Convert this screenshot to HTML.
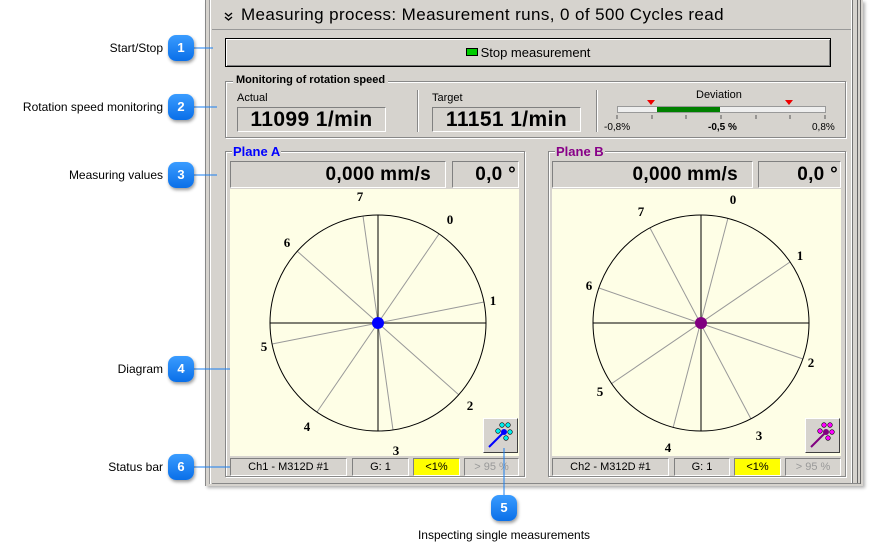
<!DOCTYPE html>
<html><head><meta charset="utf-8"><style>
body{margin:0;width:874px;height:559px;background:#fff;position:relative;overflow:hidden;font-family:"Liberation Sans",sans-serif;}
.a{position:absolute;box-sizing:border-box;}
.lbl{position:absolute;font-size:12px;color:#000;text-align:right;width:160px;left:3px;}
.badge{position:absolute;width:26px;height:26px;border-radius:8px;background:linear-gradient(#3a9cff,#0a6fe8);color:#fff;font-weight:bold;font-size:13px;text-align:center;line-height:26px;box-shadow:1px 2px 3px rgba(0,0,0,.4);}
.sunk{border:1px solid;border-color:#808080 #fff #fff #808080;background:#d6d3ce;}
.grp{border:1px solid #888;box-shadow:1px 1px 0 #fff inset,1px 1px 0 #fff;}
.st{position:absolute;height:18px;top:458px;font-size:11px;text-align:center;line-height:17px;border:1px solid;border-color:#808080 #fff #fff #808080;box-sizing:border-box;}
.big{font-weight:bold;font-size:21px;letter-spacing:0.4px;}
.val{font-weight:bold;font-size:19px;letter-spacing:0.3px;}
</style></head><body>
<!-- outer panel -->
<div class="a" style="left:205px;top:0;width:658px;height:486px;background:#d6d3ce;border-left:1px solid #888;box-shadow:2px 2px 3px rgba(0,0,0,.3);"></div>
<div class="a" style="left:209px;top:0;width:2px;height:484px;background:#fff;border-left:1px solid #999"></div>
<div class="a" style="left:851px;top:0;width:2px;height:484px;background:#fff;border-right:1px solid #777"></div>
<div class="a" style="left:857px;top:0;width:4px;height:484px;border-left:1px solid #666;border-right:1px solid #666"></div>
<div class="a" style="left:212px;top:29px;width:639px;height:1px;background:#999"></div>
<div class="a" style="left:212px;top:483px;width:648px;height:1px;background:#888"></div>
<svg class="a" style="left:224px;top:12px" width="10" height="10"><path d="M1 1 L4.5 4 L8 1 M1 5 L4.5 8 L8 5" stroke="#000" stroke-width="1.4" fill="none"/></svg>
<div class="a" style="left:241px;top:5px;font-size:17px;letter-spacing:0.4px;color:#000;white-space:nowrap">Measuring process: Measurement runs, 0 of 500 Cycles read</div>
<!-- button -->
<div class="a" style="left:225px;top:38px;width:606px;height:29px;border:1px solid #000;box-shadow:inset 1px 1px 0 #fff,inset -1px -1px 0 #808080;background:#d6d3ce;text-align:center;font-size:13px;line-height:27px"><span style="display:inline-block;width:10px;height:6px;background:#0c0;border:1px solid #000;margin-right:3px;vertical-align:1px"></span>Stop measurement</div>
<!-- monitoring group -->
<div class="a grp" style="left:225px;top:81px;width:621px;height:57px"></div>
<div class="a" style="left:233px;top:74px;font-size:11px;font-weight:bold;background:#d6d3ce;padding:0 3px">Monitoring of rotation speed</div>
<div class="a" style="left:237px;top:92px;font-size:11px">Actual</div>
<div class="a sunk big" style="left:237px;top:107px;width:149px;height:25px;text-align:center;line-height:24px;white-space:nowrap">11099 1/min</div>
<div class="a" style="left:432px;top:92px;font-size:11px">Target</div>
<div class="a sunk big" style="left:432px;top:107px;width:149px;height:25px;text-align:center;line-height:24px;white-space:nowrap">11151 1/min</div>
<div class="a" style="left:417px;top:90px;width:2px;height:42px;border-left:1px solid #888;border-right:1px solid #fff"></div>
<div class="a" style="left:596px;top:90px;width:2px;height:42px;border-left:1px solid #888;border-right:1px solid #fff"></div>
<div class="a" style="left:696px;top:89px;font-size:11px">Deviation</div>
<div class="a" style="left:617px;top:106px;width:209px;height:7px;background:#eee;border:1px solid #999"></div>
<div class="a" style="left:657px;top:107px;width:63px;height:5px;background:#008000"></div>
<svg class="a" style="left:600px;top:96px" width="240" height="40">
<polygon points="47,4 55,4 51,9" fill="#e00"/><polygon points="185,4 193,4 189,9" fill="#e00"/>
<g stroke="#555"><line x1="17" y1="19" x2="17" y2="23"/><line x1="52" y1="19" x2="52" y2="23"/><line x1="86" y1="19" x2="86" y2="23"/><line x1="121" y1="19" x2="121" y2="23"/><line x1="156" y1="19" x2="156" y2="23"/><line x1="190" y1="19" x2="190" y2="23"/><line x1="225" y1="19" x2="225" y2="23"/></g>
</svg>
<div class="a" style="left:604px;top:122px;font-size:10px">-0,8%</div>
<div class="a" style="left:708px;top:122px;font-size:10px;font-weight:bold">-0,5 %</div>
<div class="a" style="left:812px;top:122px;font-size:10px">0,8%</div>
<!-- Plane A -->
<div class="a grp" style="left:225px;top:151px;width:300px;height:326px"></div>
<div class="a" style="left:232px;top:144px;font-size:13px;font-weight:bold;color:#00f;background:#d6d3ce;padding:0 1px">Plane A</div>
<div class="a sunk val" style="left:230px;top:161px;width:216px;height:27px;text-align:right;padding-right:14px;line-height:26px;white-space:nowrap">0,000 mm/s</div>
<div class="a sunk val" style="left:452px;top:161px;width:67px;height:27px;text-align:right;padding-right:2px;line-height:26px">0,0 °</div>
<div class="a" style="left:230px;top:189px;width:289px;height:267px;background:#fefee6"></div>
<!-- Plane B -->
<div class="a grp" style="left:548px;top:151px;width:298px;height:326px"></div>
<div class="a" style="left:555px;top:144px;font-size:13px;font-weight:bold;color:#808;background:#d6d3ce;padding:0 1px">Plane B</div>
<div class="a sunk val" style="left:552px;top:161px;width:201px;height:27px;text-align:right;padding-right:14px;line-height:26px;white-space:nowrap">0,000 mm/s</div>
<div class="a sunk val" style="left:758px;top:161px;width:83px;height:27px;text-align:right;padding-right:2px;line-height:26px">0,0 °</div>
<div class="a" style="left:552px;top:189px;width:289px;height:267px;background:#fefee6"></div>
<svg class="a" style="left:0;top:0" width="874" height="559" font-family="Liberation Serif,serif" font-weight="bold" font-size="13">
<g stroke="#999" stroke-width="1">
<line x1="363" y1="216" x2="393" y2="430"/><line x1="439" y1="234" x2="317" y2="412"/><line x1="484" y1="302" x2="272" y2="344"/><line x1="459" y1="395" x2="297" y2="251"/>
<line x1="728" y1="218" x2="673" y2="428"/><line x1="790" y1="262" x2="611" y2="384"/><line x1="803" y1="359" x2="599" y2="288"/><line x1="751" y1="419" x2="650" y2="228"/>
</g>
<g stroke="#000" fill="none">
<circle cx="378" cy="323" r="108"/><line x1="270" y1="323" x2="486" y2="323"/><line x1="378" y1="215" x2="378" y2="431"/>
<circle cx="701" cy="323" r="108"/><line x1="593" y1="323" x2="809" y2="323"/><line x1="701" y1="215" x2="701" y2="431"/>
</g>
<circle cx="378" cy="323" r="6" fill="#00f"/><circle cx="701" cy="323" r="6" fill="#800080"/>
<g text-anchor="middle"><text x="360" y="201">7</text><text x="450" y="224">0</text><text x="493" y="305">1</text><text x="470" y="410">2</text><text x="396" y="455">3</text><text x="307" y="431">4</text><text x="264" y="351">5</text><text x="287" y="247">6</text>
<text x="733" y="204">0</text><text x="800" y="260">1</text><text x="811" y="367">2</text><text x="759" y="440">3</text><text x="668" y="452">4</text><text x="600" y="396">5</text><text x="589" y="290">6</text><text x="641" y="216">7</text></g>
</svg>
<!-- magic buttons -->
<div class="a" style="left:483px;top:418px;width:35px;height:35px;background:#d6d3ce;border:1px solid;border-color:#fff #404040 #404040 #fff"></div>
<svg class="a" style="left:483px;top:418px" width="35" height="35"><line x1="6" y1="29" x2="21" y2="14" stroke="#00f" stroke-width="2"/><circle cx="21" cy="14" r="3" fill="#00f"/><g fill="#0ee" stroke="#000" stroke-width=".6"><circle cx="19" cy="7" r="2.3"/><circle cx="25" cy="7" r="2.3"/><circle cx="27" cy="14" r="2.3"/><circle cx="23" cy="20" r="2.3"/><circle cx="15" cy="13" r="2.3"/></g></svg>
<div class="a" style="left:805px;top:418px;width:35px;height:35px;background:#d6d3ce;border:1px solid;border-color:#fff #404040 #404040 #fff"></div>
<svg class="a" style="left:805px;top:418px" width="35" height="35"><line x1="6" y1="29" x2="21" y2="14" stroke="#800080" stroke-width="2"/><circle cx="21" cy="14" r="3" fill="#800080"/><g fill="#f0f" stroke="#000" stroke-width=".6"><circle cx="19" cy="7" r="2.3"/><circle cx="25" cy="7" r="2.3"/><circle cx="27" cy="14" r="2.3"/><circle cx="23" cy="20" r="2.3"/><circle cx="15" cy="13" r="2.3"/></g></svg>
<!-- status -->
<div class="st" style="left:230px;width:117px">Ch1 - M312D #1</div>
<div class="st" style="left:352px;width:57px">G: 1</div>
<div class="st" style="left:413px;width:47px;background:#ff0">&lt;1%</div>
<div class="st" style="left:464px;width:55px;color:#999">&gt; 95 %</div>
<div class="st" style="left:552px;width:117px">Ch2 - M312D #1</div>
<div class="st" style="left:674px;width:56px">G: 1</div>
<div class="st" style="left:734px;width:47px;background:#ff0">&lt;1%</div>
<div class="st" style="left:785px;width:56px;color:#999">&gt; 95 %</div>
<!-- callouts -->
<svg class="a" style="left:0;top:0" width="874" height="559"><g stroke="#1a7ff0" stroke-width="1">
<line x1="194" y1="48" x2="213" y2="48"/><line x1="194" y1="107" x2="217" y2="107"/><line x1="194" y1="175" x2="217" y2="175"/><line x1="194" y1="369" x2="230" y2="369"/><line x1="194" y1="467" x2="230" y2="467"/><line x1="504" y1="448" x2="504" y2="495"/></g></svg>
<div class="lbl" style="top:41px">Start/Stop</div><div class="badge" style="left:168px;top:35px">1</div>
<div class="lbl" style="top:100px">Rotation speed monitoring</div><div class="badge" style="left:168px;top:94px">2</div>
<div class="lbl" style="top:168px">Measuring values</div><div class="badge" style="left:168px;top:162px">3</div>
<div class="lbl" style="top:362px">Diagram</div><div class="badge" style="left:168px;top:356px">4</div>
<div class="lbl" style="top:460px">Status bar</div><div class="badge" style="left:168px;top:454px">6</div>
<div class="badge" style="left:491px;top:495px">5</div>
<div class="a" style="left:354px;top:528px;width:300px;text-align:center;font-size:12px">Inspecting single measurements</div>
</body></html>
